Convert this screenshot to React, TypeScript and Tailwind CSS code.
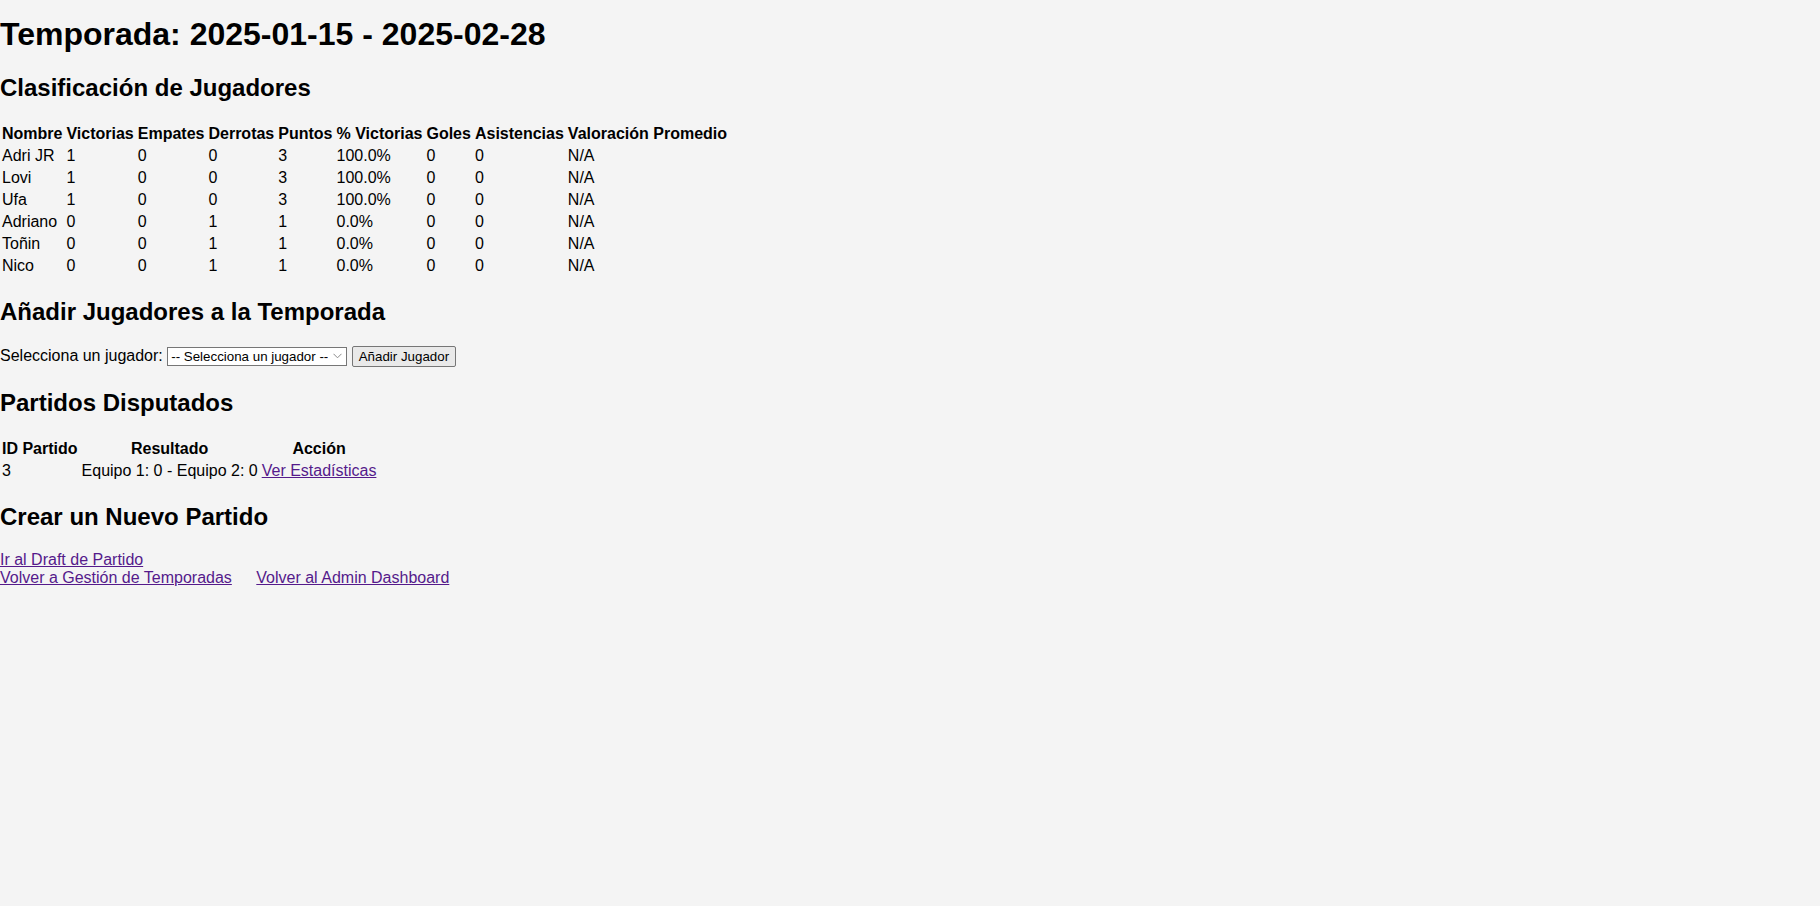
import React from 'react'

const players = [
  { name: 'Adri JR', w: 1, d: 0, l: 0, pts: 3, pct: '100.0%', goals: 0, ast: 0, rating: 'N/A' },
  { name: 'Lovi', w: 1, d: 0, l: 0, pts: 3, pct: '100.0%', goals: 0, ast: 0, rating: 'N/A' },
  { name: 'Ufa', w: 1, d: 0, l: 0, pts: 3, pct: '100.0%', goals: 0, ast: 0, rating: 'N/A' },
  { name: 'Adriano', w: 0, d: 0, l: 1, pts: 1, pct: '0.0%', goals: 0, ast: 0, rating: 'N/A' },
  { name: 'Toñin', w: 0, d: 0, l: 1, pts: 1, pct: '0.0%', goals: 0, ast: 0, rating: 'N/A' },
  { name: 'Nico', w: 0, d: 0, l: 1, pts: 1, pct: '0.0%', goals: 0, ast: 0, rating: 'N/A' },
]

const headers = [
  'Nombre',
  'Victorias',
  'Empates',
  'Derrotas',
  'Puntos',
  '% Victorias',
  'Goles',
  'Asistencias',
  'Valoración Promedio',
]

function H2({ children }: { children: React.ReactNode }) {
  return <h2 className="my-[19.92px] text-[24px] font-bold">{children}</h2>
}

function Th({ children }: { children: React.ReactNode }) {
  return <th className="p-[1px] text-center font-bold">{children}</th>
}

function Td({ children }: { children: React.ReactNode }) {
  return <td className="p-[1px] text-left">{children}</td>
}

function Link({ children, className = '' }: { children: React.ReactNode; className?: string }) {
  return (
    <a href="#" className={`text-[#551a8b] underline ${className}`}>
      {children}
    </a>
  )
}

export default function App() {
  return (
    <div className="flow-root min-h-screen bg-[#f4f4f4] font-['Liberation_Sans',Arial,sans-serif] text-[16px] leading-[normal] text-black">
      <h1 className="mt-[16px] mb-[21.44px] text-[32px] font-bold">Temporada: 2025-01-15 - 2025-02-28</h1>

      <H2>Clasificación de Jugadores</H2>
      <table className="-ml-[1px] mb-[1px] border-separate border-spacing-[2px]">
        <thead>
          <tr>
            {headers.map((h) => (
              <Th key={h}>{h}</Th>
            ))}
          </tr>
        </thead>
        <tbody>
          {players.map((p) => (
            <tr key={p.name}>
              <Td>{p.name}</Td>
              <Td>{p.w}</Td>
              <Td>{p.d}</Td>
              <Td>{p.l}</Td>
              <Td>{p.pts}</Td>
              <Td>{p.pct}</Td>
              <Td>{p.goals}</Td>
              <Td>{p.ast}</Td>
              <Td>{p.rating}</Td>
            </tr>
          ))}
        </tbody>
      </table>

      <H2>Añadir Jugadores a la Temporada</H2>
      <form className="pb-[2px]" onSubmit={(e) => e.preventDefault()}>
        <label>Selecciona un jugador:</label>{' '}
        <span className="relative inline-block align-baseline">
          <select className="h-[19px] w-[180px] appearance-none rounded-none border border-[#767676] bg-white pl-[3px] pr-[18px] text-[13.333px] text-black">
            <option>-- Selecciona un jugador --</option>
          </select>
          <svg
            className="pointer-events-none absolute top-[6px] right-[5px]"
            width="9"
            height="6"
            viewBox="0 0 9 6"
            fill="none"
          >
            <path d="M0.5 0.8 L4.5 4.8 L8.5 0.8" stroke="#8a8a8a" strokeWidth="1" />
          </svg>
        </span>{' '}
        <button
          type="submit"
          className="h-[21px] rounded-[2px] border border-[#767676] bg-[#e9e9e9] px-[6px] text-[13.333px] text-black"
        >
          Añadir Jugador
        </button>
      </form>

      <H2>Partidos Disputados</H2>
      <table className="-ml-[1px] border-separate border-spacing-[2px]">
        <thead>
          <tr>
            <Th>ID Partido</Th>
            <Th>Resultado</Th>
            <Th>Acción</Th>
          </tr>
        </thead>
        <tbody>
          <tr>
            <Td>3</Td>
            <Td>Equipo 1: 0 - Equipo 2: 0</Td>
            <Td>
              <Link>Ver Estadísticas</Link>
            </Td>
          </tr>
        </tbody>
      </table>

      <H2>Crear un Nuevo Partido</H2>
      <div>
        <Link>Ir al Draft de Partido</Link>
      </div>
      <div>
        <Link className="mr-[20px]">Volver a Gestión de Temporadas</Link>{' '}
        <Link>Volver al Admin Dashboard</Link>
      </div>
    </div>
  )
}
